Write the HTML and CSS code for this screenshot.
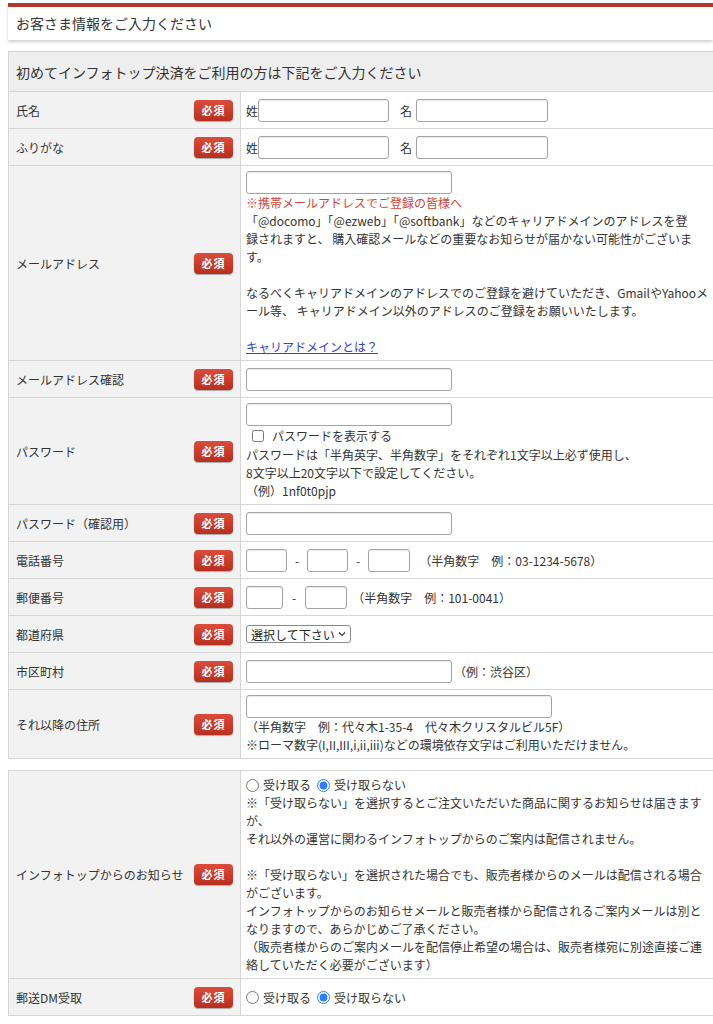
FILE: index.html
```html
<!DOCTYPE html>
<html lang="ja">
<head>
    <meta charset="UTF-8">
    <meta name="viewport" content="width=device-width, initial-scale=1.0">
    <title>お客さま情報をご入力ください</title>
    <link rel="stylesheet" href="styles.css">
</head>
<body>
    <div class="page">
        <h2 class="page-title">お客さま情報をご入力ください</h2>

        <table class="entry-table">
            <colgroup>
                <col class="col-label">
                <col>
            </colgroup>
            <tr>
                <th class="caption-cell" colspan="2">初めてインフォトップ決済をご利用の方は下記をご入力ください</th>
            </tr>
            <tr>
                <td class="label"><div class="label-inner"><span>氏名</span><span class="badge">必須</span></div></td>
                <td class="value">
                    <div class="field">
                        <span>姓</span><input type="text" class="text w-name">
                        <span class="name-mark">名</span><input type="text" class="text w-name2">
                    </div>
                </td>
            </tr>
            <tr>
                <td class="label"><div class="label-inner"><span>ふりがな</span><span class="badge">必須</span></div></td>
                <td class="value">
                    <div class="field">
                        <span>姓</span><input type="text" class="text w-name">
                        <span class="name-mark">名</span><input type="text" class="text w-name2">
                    </div>
                </td>
            </tr>
            <tr>
                <td class="label"><div class="label-inner"><span>メールアドレス</span><span class="badge">必須</span></div></td>
                <td class="value">
                    <input type="text" class="text block w-mail">
                    <p class="alert">※携帯メールアドレスでご登録の皆様へ</p>
                    <p>「@docomo」「@ezweb」「@softbank」などのキャリアドメインのアドレスを登<br>録されますと、 購入確認メールなどの重要なお知らせが届かない可能性がございま<br>す。</p>
                    <p class="gap">なるべくキャリアドメインのアドレスでのご登録を避けていただき、GmailやYahooメ<br>ール等、 キャリアドメイン以外のアドレスのご登録をお願いいたします。</p>
                    <p class="gap"><a href="#" class="help-link">キャリアドメインとは？</a></p>
                </td>
            </tr>
            <tr>
                <td class="label"><div class="label-inner"><span>メールアドレス確認</span><span class="badge">必須</span></div></td>
                <td class="value"><input type="text" class="text block w-mail"></td>
            </tr>
            <tr>
                <td class="label"><div class="label-inner"><span>パスワード</span><span class="badge">必須</span></div></td>
                <td class="value">
                    <input type="password" class="text block w-mail">
                    <label class="check-line"><input type="checkbox" class="check">パスワードを表示する</label>
                    <p>パスワードは「半角英字、半角数字」をそれぞれ1文字以上必ず使用し、<br>8文字以上20文字以下で設定してください。<br>（例）1nf0t0pjp</p>
                </td>
            </tr>
            <tr>
                <td class="label"><div class="label-inner"><span>パスワード（確認用）</span><span class="badge">必須</span></div></td>
                <td class="value"><input type="password" class="text block w-mail"></td>
            </tr>
            <tr>
                <td class="label"><div class="label-inner"><span>電話番号</span><span class="badge">必須</span></div></td>
                <td class="value">
                    <div class="field">
                        <input type="text" class="text w-tel">
                        <span class="sep">-</span>
                        <input type="text" class="text w-tel">
                        <span class="sep">-</span>
                        <input type="text" class="text w-tel3">
                        <span class="note">（半角数字　例：03-1234-5678）</span>
                    </div>
                </td>
            </tr>
            <tr>
                <td class="label"><div class="label-inner"><span>郵便番号</span><span class="badge">必須</span></div></td>
                <td class="value">
                    <div class="field">
                        <input type="text" class="text w-zip">
                        <span class="sep sep-wide">-</span>
                        <input type="text" class="text w-zip2">
                        <span class="note note-near">（半角数字　例：101-0041）</span>
                    </div>
                </td>
            </tr>
            <tr>
                <td class="label"><div class="label-inner"><span>都道府県</span><span class="badge">必須</span></div></td>
                <td class="value">
                    <div class="field">
                        <span class="select-box">
                            <select class="pref">
                                <option>選択して下さい</option>
                            </select>
                            <svg class="chevron" width="8" height="6" viewBox="0 0 8 6"><path d="M1 1.5 L4 4.5 L7 1.5" fill="none" stroke="#333" stroke-width="1.1"/></svg>
                        </span>
                    </div>
                </td>
            </tr>
            <tr>
                <td class="label"><div class="label-inner"><span>市区町村</span><span class="badge">必須</span></div></td>
                <td class="value">
                    <div class="field">
                        <input type="text" class="text w-mail">
                        <span class="note note-tight">（例：渋谷区）</span>
                    </div>
                </td>
            </tr>
            <tr>
                <td class="label"><div class="label-inner"><span>それ以降の住所</span><span class="badge">必須</span></div></td>
                <td class="value">
                    <input type="text" class="text block w-addr">
                    <p>（半角数字　例：代々木1-35-4　代々木クリスタルビル5F）<br>※ローマ数字(I,II,III,i,ii,iii)などの環境依存文字はご利用いただけません。</p>
                </td>
            </tr>
        </table>

        <table class="entry-table">
            <colgroup>
                <col class="col-label">
                <col>
            </colgroup>
            <tr>
                <td class="label"><div class="label-inner"><span>インフォトップからのお知らせ</span><span class="badge">必須</span></div></td>
                <td class="value">
                    <div class="radios">
                        <label class="radio"><input type="radio" name="news">受け取る</label>
                        <label class="radio"><input type="radio" name="news" checked>受け取らない</label>
                    </div>
                    <p>※「受け取らない」を選択するとご注文いただいた商品に関するお知らせは届きます<br>が、<br>それ以外の運営に関わるインフォトップからのご案内は配信されません。</p>
                    <p class="gap">※「受け取らない」を選択された場合でも、販売者様からのメールは配信される場合<br>がございます。<br>インフォトップからのお知らせメールと販売者様から配信されるご案内メールは別と<br>なりますので、あらかじめご了承ください。<br>（販売者様からのご案内メールを配信停止希望の場合は、販売者様宛に別途直接ご連<br>絡していただく必要がございます）</p>
                </td>
            </tr>
            <tr>
                <td class="label"><div class="label-inner"><span>郵送DM受取</span><span class="badge">必須</span></div></td>
                <td class="value">
                    <div class="radios">
                        <label class="radio"><input type="radio" name="dm">受け取る</label>
                        <label class="radio"><input type="radio" name="dm" checked>受け取らない</label>
                    </div>
                </td>
            </tr>
        </table>
    </div>
</body>
</html>
```

FILE: styles.css
```css
* {
    box-sizing: border-box;
}

body {
    margin: 0;
    background: #fff;
    color: #333;
    font-family: "Noto Sans CJK JP", sans-serif;
    font-size: 12px;
}

.page {
    padding: 3px 0 0 8px;
    overflow: hidden;
}

.page-title {
    margin: 0;
    height: 37px;
    padding-left: 8px;
    border-top: 4px solid #b3392e;
    background: #fff;
    box-shadow: 0 2px 3px rgba(0, 0, 0, 0.18);
    font-size: 14px;
    font-weight: normal;
    line-height: 33px;
}

.entry-table {
    width: 716px;
    margin-top: 11px;
    border-collapse: collapse;
    table-layout: fixed;
}

.col-label {
    width: 232px;
}

.entry-table th,
.entry-table td {
    border: 1px solid #d6d6d6;
}

.caption-cell {
    height: 40px;
    padding: 0 7px;
    background: #eee;
    font-size: 14px;
    font-weight: normal;
    text-align: left;
}

.label {
    height: 37px;
    padding: 0 7px;
    background: #f2f2f2;
    vertical-align: middle;
}

.label-inner {
    display: flex;
    align-items: center;
    justify-content: space-between;
}

.badge {
    width: 39px;
    height: 21px;
    border-radius: 4px;
    background: linear-gradient(#db4c3b, #b72f1f);
    box-shadow: 0 1px 1px rgba(0, 0, 0, 0.3);
    color: #fff;
    font-size: 11px;
    font-weight: bold;
    line-height: 21px;
    text-align: center;
    letter-spacing: 1px;
}

.value {
    padding: 5px 6px 4px 5px;
    background: #fff;
    line-height: 18px;
    vertical-align: middle;
}

.value p {
    margin: 0;
}

.value .gap {
    margin-top: 18px;
}

.field {
    display: flex;
    align-items: center;
}

.text {
    height: 23px;
    padding: 0 4px;
    border: 1px solid #a3a3a3;
    border-radius: 3px;
    background: #fff;
    box-shadow: inset 0 1px 1px rgba(0, 0, 0, 0.08);
    font-family: inherit;
    font-size: 12px;
}

.block {
    display: block;
}

.w-name { width: 131px; }
.w-name2 { width: 132px; }
.w-mail { width: 206px; }
.w-addr { width: 306px; }
.w-tel { width: 41px; }
.w-tel3 { width: 42px; }
.w-zip { width: 37px; }
.w-zip2 { width: 42px; }

.name-mark {
    margin: 0 4px 0 11px;
}

.sep {
    margin: 0 8px;
}

.sep-wide {
    margin: 0 9px;
}

.note {
    margin-left: 9px;
}

.note-near {
    margin-left: 5px;
}

.note-tight {
    margin-left: 2px;
}

.alert {
    color: #d0453a;
}

.help-link {
    color: #3344cc;
}

.check-line {
    display: flex;
    align-items: center;
    height: 20px;
}

.check {
    width: 12px;
    height: 12px;
    margin: 0 8px 0 6px;
}

.select-box {
    position: relative;
    display: inline-block;
}

.pref {
    width: 105px;
    height: 18px;
    padding: 0 14px 0 4px;
    border: 1px solid #8a8a8a;
    border-radius: 3px;
    background: #fff;
    color: #222;
    font-family: inherit;
    font-size: 12px;
    appearance: none;
}

.chevron {
    position: absolute;
    top: 6px;
    right: 5px;
    pointer-events: none;
}

.radios {
    display: flex;
    align-items: center;
    height: 18px;
    gap: 6px;
}

.radio {
    display: flex;
    align-items: center;
}

.radio input {
    width: 13px;
    height: 13px;
    margin: 0 4px 0 0;
    accent-color: #2f7cf6;
}
```
